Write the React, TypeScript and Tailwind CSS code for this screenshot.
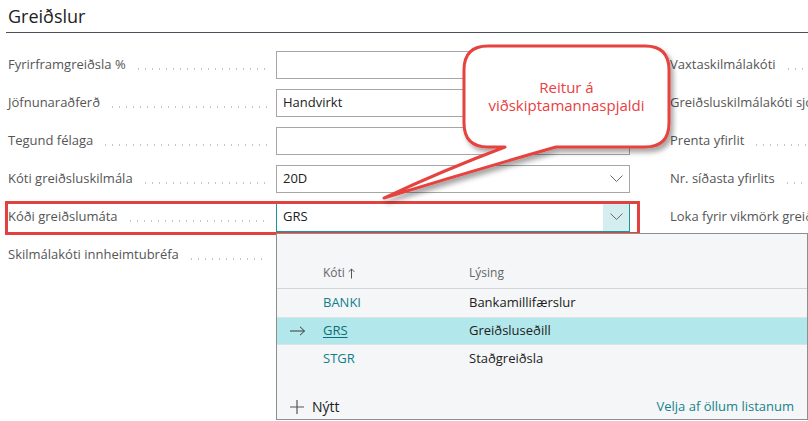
const font = "font-['Open_Sans',sans-serif]";

const Dots = () => (
  <span className="flex-1 h-[2px] mt-[7px] ml-[9px] bg-[radial-gradient(circle,#c6c6c6_0.9px,transparent_1.1px)] bg-[length:7px_2px] bg-repeat-x"></span>
);

const Chevron = () => (
  <svg width="13" height="8" viewBox="0 0 13 8" className="shrink-0">
    <polyline points="0.5,0.5 6.5,6.5 12.5,0.5" fill="none" stroke="#6b6b6b" strokeWidth="1" />
  </svg>
);

interface IField {
  label: string;
  value?: string;
  select?: boolean;
  active?: boolean;
}

const leftRows: IField[] = [
  { label: "Fyrirframgreiðsla %" },
  { label: "Jöfnunaraðferð", value: "Handvirkt" },
  { label: "Tegund félaga" },
  { label: "Kóti greiðsluskilmála", value: "20D", select: true },
  { label: "Kóði greiðslumáta", value: "GRS", select: true, active: true },
  { label: "Skilmálakóti innheimtubréfa" },
];

const rightRows = [
  "Vaxtaskilmálakóti",
  "Greiðsluskilmálakóti sjóðsafsláttar",
  "Prenta yfirlit",
  "Nr. síðasta yfirlits",
  "Loka fyrir vikmörk greiðslu",
];

const Row = ({ label, value, select, active }: IField) => (
  <div className="flex items-center h-[38px]">
    <div className="flex items-center w-[268px] pr-[8px]">
      <span className="text-[13px] text-[#555] whitespace-nowrap">{label}</span>
      <Dots />
    </div>
    <div
      className={
        active
          ? "flex items-center w-[354px] h-[30px] border border-[#1b959b] bg-white"
          : "flex items-center w-[354px] h-[28px] border border-[#a6a6a6] bg-white"
      }
    >
      <span className="flex-1 pl-[6px] text-[13px] text-[#212121]">{value}</span>
      {select && (
        <span
          className={
            active
              ? "flex items-center justify-center w-[26px] h-full bg-[#d4eef0]"
              : "flex items-center justify-center w-[26px] h-full"
          }
        >
          <Chevron />
        </span>
      )}
    </div>
  </div>
);

const ListRow = ({ code, text, current }: { code: string; text: string; current?: boolean }) => (
  <div
    className={
      current
        ? "flex items-center h-[28px] bg-[#b2e7eb] border-y border-[#dde3e5]"
        : "flex items-center h-[28px]"
    }
  >
    <span className="w-[46px] pl-[13px] flex items-center">
      {current && (
        <svg width="16" height="10" viewBox="0 0 16 10">
          <path d="M0 5 H14.5 M10 0.8 L14.5 5 L10 9.2" fill="none" stroke="#3a3a3a" strokeWidth="1" />
        </svg>
      )}
    </span>
    <span
      className={
        current
          ? "w-[146px] text-[13px] text-[#0b6f77] underline underline-offset-2"
          : "w-[146px] text-[13px] text-[#0e7f88]"
      }
    >
      {code}
    </span>
    <span className="text-[13px] text-[#212121]">{text}</span>
  </div>
);

export default function App() {
  return (
    <div className={`relative w-[808px] h-[421px] overflow-hidden bg-white ${font}`}>
      <div className="ml-[6px] h-[33px] border-b border-[#4a5058] pl-[2px] pt-[4px]">
        <h1 className="text-[18px] leading-[24px] text-[#222]">Greiðslur</h1>
      </div>

      <div className="flex gap-[40px] pl-[8px] pt-[13px]">
        <div className="flex flex-col">
          {leftRows.map((r) => (
            <Row key={r.label} {...r} />
          ))}
        </div>
        <div className="flex flex-col flex-1 min-w-0">
          {rightRows.map((l) => (
            <div key={l} className="flex items-center h-[38px] overflow-hidden">
              <span className="text-[13px] text-[#555] whitespace-nowrap">{l}</span>
              <Dots />
            </div>
          ))}
        </div>
      </div>

      {/* red frame round the payment method field */}
      <div className="absolute left-[5px] top-[201px] w-[635px] h-[34px] border-[3px] border-[#e2423f]"></div>

      {/* lookup dropdown */}
      <div className="absolute left-[276px] top-[233px] w-[532px] h-[187px] border border-[#8e8e8e] bg-[#f5f6f8] flex flex-col">
        <div className="mt-[28px] h-[27px] flex border-b border-[#d3d6d9]">
          <span className="w-[46px]"></span>
          <span className="w-[146px] flex items-center gap-[3px] h-[22px] text-[12px] text-[#666]">
            Kóti
            <svg width="7" height="11" viewBox="0 0 7 11">
              <path d="M3.5 10.5 V1 M0.7 3.8 L3.5 1 L6.3 3.8" fill="none" stroke="#555" strokeWidth="1" />
            </svg>
          </span>
          <span className="h-[22px] flex items-center text-[12px] text-[#666]">Lýsing</span>
        </div>
        <ListRow code="BANKI" text="Bankamillifærslur" />
        <ListRow code="GRS" text="Greiðsluseðill" current />
        <ListRow code="STGR" text="Staðgreiðsla" />
        <div className="mt-auto h-[25px] flex items-center justify-between pl-[13px] pr-[13px]">
          <span className="flex items-center gap-[8px] text-[14px] text-[#212121]">
            <svg width="14" height="14" viewBox="0 0 14 14">
              <path d="M7 0 V14 M0 7 H14" fill="none" stroke="#555" strokeWidth="1.2" />
            </svg>
            Nýtt
          </span>
          <span className="text-[13px] text-[#15838c]">Velja af öllum listanum</span>
        </div>
      </div>

      {/* callout */}
      <svg className="absolute left-0 top-0 pointer-events-none" width="808" height="421" viewBox="0 0 808 421">
        <defs>
          <filter id="sh" x="-20%" y="-20%" width="140%" height="140%">
            <feDropShadow dx="3" dy="4" stdDeviation="2.5" floodColor="#000" floodOpacity="0.35" />
          </filter>
        </defs>
        <path
          d="M488 46 H645 Q669 46 669 70 V123 Q669 147 645 147 H556 Q468 172 384 198 Q444 170 505 147 H488 Q464 147 464 123 V70 Q464 46 488 46 Z"
          fill="#fff"
          stroke="#e5433f"
          strokeWidth="3"
          strokeLinejoin="round"
          filter="url(#sh)"
        />
      </svg>
      <div className="absolute left-[466px] top-[78px] w-[201px] flex flex-col items-center text-[15px] leading-[18px] text-[#e8413f]">
        <span>Reitur á</span>
        <span>viðskiptamannaspjaldi</span>
      </div>
    </div>
  );
}
